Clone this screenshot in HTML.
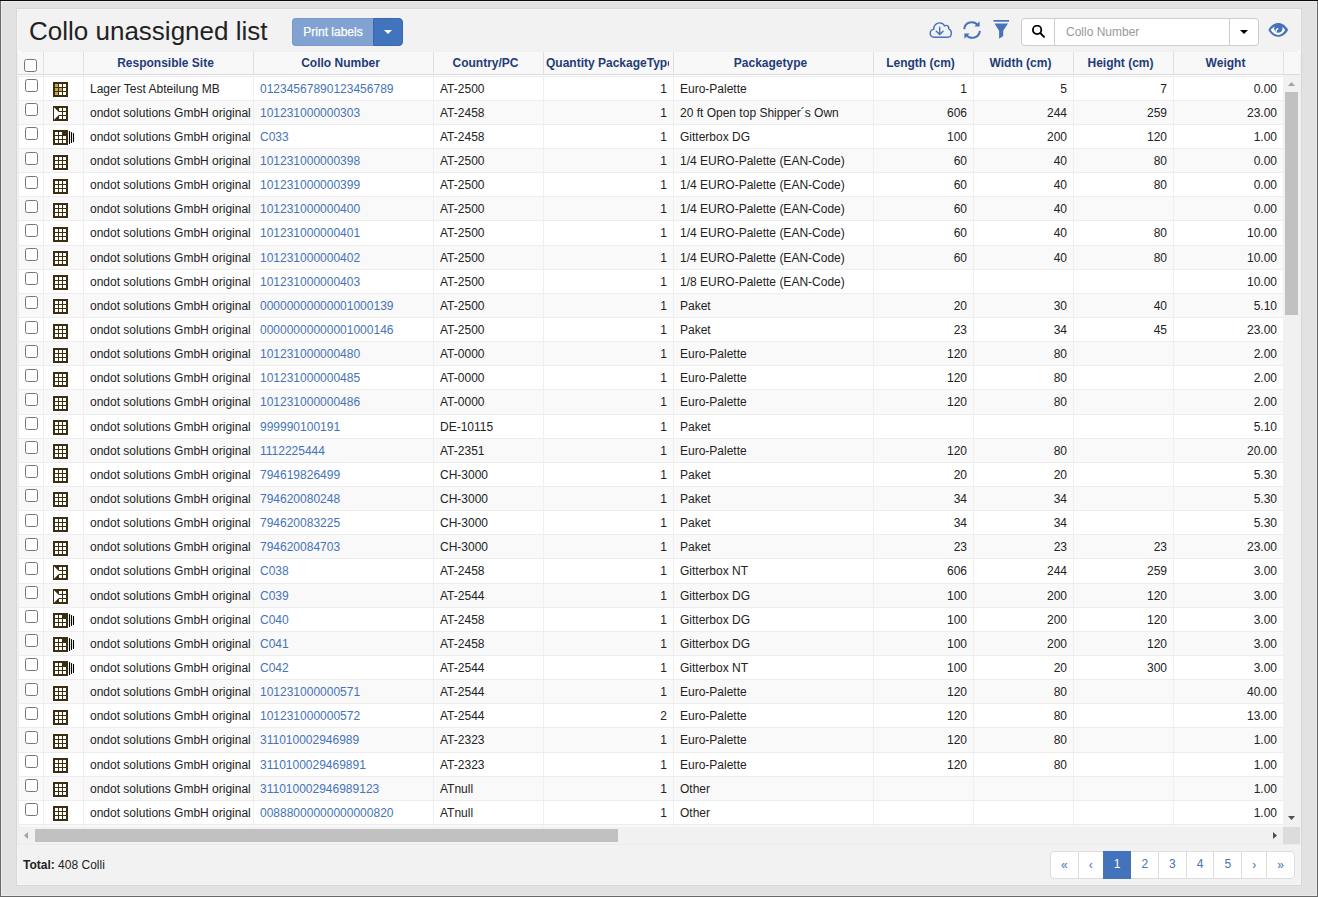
<!DOCTYPE html><html lang="en"><head><meta charset="utf-8"><title>Collo unassigned list</title><style>
*{box-sizing:border-box}
html,body{margin:0;padding:0}
body{width:1318px;height:897px;overflow:hidden;background:#e2e2e2;position:relative;font-family:"Liberation Sans",sans-serif;font-size:12px;color:#222;line-height:17.143px}
.fr{position:absolute;background:#000}
.panel{position:absolute;left:16px;top:8px;width:1286px;height:878px;border:1px solid #d8d8d8;background:#f2f2f2;box-shadow:inset 0 0 0 1px #f5f5f5}
.abs{position:absolute}
h1{position:absolute;margin:0;font-weight:normal;font-size:26px;line-height:30px;color:#222;white-space:nowrap}
.btnl{position:absolute;background:#82a2d1;border:1px solid #7698ca;border-right:0;color:#fff;border-radius:4px 0 0 4px;text-align:center;line-height:26px;font-size:12px;padding:0;-webkit-text-stroke:0.25px #fff}
.btnr{position:absolute;background:#4274bd;border:1px solid #3968af;border-radius:0 4px 4px 0}
.caret{position:absolute;width:0;height:0;border-left:4px solid transparent;border-right:4px solid transparent;border-top:4px solid #fff}
.ig{position:absolute;background:#fff;border:1px solid #ccc;border-radius:4px}
.ig i{position:absolute;top:0;bottom:0;width:1px;background:#ccc}
.ph{position:absolute;color:#999;font-size:12px;line-height:27px;white-space:nowrap}
.grid{position:absolute;background:#fff;overflow:hidden}
.hd{position:absolute;left:0;top:0;right:0;background:#f8f8f8;border-top:1px solid #efefef;border-bottom:1px solid #d7dbe0;border-radius:5px 5px 0 0}
.hc{position:absolute;top:0;bottom:0;border-right:1px solid #dde1e6}
.hi{margin:3px 4px 0 2px;overflow:hidden;font-weight:bold;color:#1f3c78;text-align:center;white-space:nowrap;line-height:17.143px}
.hi u{display:inline-block;width:4px;height:1px}
.vp{position:absolute;left:0;overflow:hidden}
.rw{position:relative;height:24.143px;border-top:1px solid #ededed;background:#fff;white-space:nowrap}
.rw:nth-child(even){background:#f9f9f9}
.rw:before{content:'';position:absolute;left:0;top:0;bottom:0;width:1px;background:#efefef}
.c{position:absolute;top:0;bottom:0;border-right:1px solid #efefef;padding:4px 6px 0 6px;overflow:hidden;white-space:nowrap}
.r{text-align:right;padding-right:6px}
.lk{color:#4573b9}
.ck{position:absolute;left:7px;top:2.5px;width:13px;height:13px;margin:0;padding:0}
.ico{position:absolute;left:8px;top:4.5px}
.sbv{position:absolute;background:#f1f1f1}
.th{position:absolute;background:#c1c1c1}
.ft{position:absolute;white-space:nowrap;color:#222}
.pg{position:absolute;display:flex;height:28px}
.pg span{display:block;height:28px;border:1px solid #ddd;margin-left:-1px;background:#fff;color:#4573b9;text-align:center;line-height:25px;padding:0 10px;font-size:12px}
.pg span:first-child{margin-left:0;border-radius:4px 0 0 4px}
.pg span:last-child{border-radius:0 4px 4px 0}
.pg span b{font-weight:normal;position:relative;top:1px}
.pg span.on{background:#4373bb;border-color:#4373bb;color:#fff;position:relative}
</style></head><body>
<div class="panel">
<h1 style="left:12px;top:7px">Collo unassigned list</h1>
<div class="btnl" style="left:275px;top:9px;width:81px;height:28px">Print labels</div>
<div class="btnr" style="left:356px;top:9px;width:30px;height:28px"><span class="caret" style="left:10px;top:11px"></span></div>
<svg class="abs" style="left:912px;top:12px" width="24" height="18" viewBox="0 0 24 18" fill="none" stroke="#4573b9" stroke-width="1.400" stroke-linecap="round" stroke-linejoin="round"><path d="M4.700 16.200C2.700 16.200 1.200 14.500 1.200 12.300C1.200 10.300 2.600 8.700 4.700 8.400C4.600 4.700 7.200 1.900 10.500 1.900C12.800 1.900 14.700 3.100 15.700 5.000C16.300 4.500 17.000 4.300 17.600 4.400C19.000 4.600 19.900 6.000 19.700 7.900C21.300 8.500 22.300 10.100 22.300 12.000C22.300 14.400 20.800 16.200 18.800 16.200Z"/><path d="M10.700 6.200v7.200M7.300 10.200l3.400 3.400 3.400-3.400"/></svg>
<svg class="abs" style="left:945px;top:10.5px" width="20" height="20" viewBox="0 0 20 20" fill="none" stroke="#4573b9" stroke-width="2" stroke-linecap="butt"><path d="M2.2 9.2a7.6 7.6 0 0 1 13.6-4.0"/><path d="M17.8 10.8a7.6 7.6 0 0 1-13.6 4.0"/><path d="M17.6 1.2v5.2h-5.2z" fill="#4573b9" stroke="none"/><path d="M2.4 18.8v-5.2h5.2z" fill="#4573b9" stroke="none"/></svg>
<svg class="abs" style="left:976px;top:11px" width="17" height="20" viewBox="0 0 17 20" fill="#4573b9"><rect x="0.500" y="0" width="15.500" height="1.700"/><path d="M1.500 3.500h13.500l-4.800 7.200v5.200l-4.100 2.900v-8.100z"/></svg>
<div class="ig" style="left:1004px;top:9px;width:238px;height:28px"><i style="left:32px"></i><i style="left:207px"></i>
<svg class="abs" style="left:10px;top:6px" width="14" height="14" viewBox="0 0 14 14" fill="none" stroke="#000" stroke-width="1.8"><circle cx="5.1" cy="4.9" r="4.2"/><path d="M8.2 8.0l3.9 3.9" stroke-linecap="round"/></svg>
<span class="ph" style="left:44px;top:0">Collo Number</span>
<span class="caret" style="left:218px;top:11px;border-top-color:#000"></span>
</div>
<svg class="abs" style="left:1251px;top:14px" width="21" height="14" viewBox="0 0 21 14"><path d="M0.3 6.900C2.800 2.600 6.200 0 10.200 0s7.400 2.600 9.900 6.900c-2.500 4.300-5.900 6.800-9.900 6.800S2.800 11.200 0.300 6.900z" fill="#4573b9"/><path d="M2.700 7.000C4.600 4.400 7.200 2.900 10.200 2.900s5.300 1.500 6.900 4.100c-1.600 3-4 4.900-6.900 4.900S4.600 10 2.700 7.000z" fill="#fff"/><circle cx="10.350" cy="5.500" r="4.200" fill="#4573b9"/><path d="M9.700 5.800Q8.000 6.300 8.100 8.300" stroke="#fff" stroke-width="1.500" fill="none" stroke-linecap="round"/></svg>
<div class="grid" style="left:0px;top:42px;width:1284px;height:793px;border-left:1px solid #f0f0f0;border-right:1px solid #f0f0f0">
<div class="hd" style="height:24px">
<div class="hc" style="left:0px;width:26px"><input type="checkbox" class="ck" style="left:6px;top:7px"></div>
<div class="hc" style="left:26px;width:40px"></div>
<div class="hc" style="left:66px;width:170px"><div class="hi">Responsible Site<u></u></div></div>
<div class="hc" style="left:236px;width:180px"><div class="hi">Collo Number<u></u></div></div>
<div class="hc" style="left:416px;width:110px"><div class="hi">Country/PC<u></u></div></div>
<div class="hc" style="left:526px;width:130px"><div class="hi">Quantity PackageType<u></u></div></div>
<div class="hc" style="left:656px;width:200px"><div class="hi">Packagetype<u></u></div></div>
<div class="hc" style="left:856px;width:100px"><div class="hi">Length (cm)<u></u></div></div>
<div class="hc" style="left:956px;width:100px"><div class="hi">Width (cm)<u></u></div></div>
<div class="hc" style="left:1056px;width:100px"><div class="hi">Height (cm)<u></u></div></div>
<div class="hc" style="left:1156px;width:110px"><div class="hi">Weight<u></u></div></div>
</div>
<div class="vp" style="top:24px;width:1265px;height:752px;padding-top:0.6px">
<div class="rw">
<div class="c" style="left:0px;width:26px"><input type="checkbox" class="ck"></div>
<div class="c" style="left:26px;width:40px"><svg class="ico" width="17" height="17" viewBox="-1 -1 17 17" shape-rendering="crispEdges"><rect x="-1" y="-1" width="17" height="17" fill="#fff"/><rect x="0" y="0" width="15" height="15" fill="#3a2d10"/><rect x="2" y="2" width="3" height="3" fill="#c9a94d"/><rect x="6" y="2" width="3" height="3" fill="#fff"/><rect x="10" y="2" width="3" height="3" fill="#fff"/><rect x="2" y="6" width="3" height="3" fill="#c9a94d"/><rect x="6" y="6" width="3" height="3" fill="#c9a94d"/><rect x="10" y="6" width="3" height="3" fill="#fff"/><rect x="2" y="10" width="3" height="3" fill="#c9a94d"/><rect x="6" y="10" width="3" height="3" fill="#fff"/><rect x="10" y="10" width="3" height="3" fill="#fff"/></svg></div>
<div class="c" style="left:66px;width:170px">Lager Test Abteilung MB</div>
<div class="c lk" style="left:236px;width:180px">01234567890123456789</div>
<div class="c" style="left:416px;width:110px">AT-2500</div>
<div class="c r" style="left:526px;width:130px">1</div>
<div class="c" style="left:656px;width:200px">Euro-Palette</div>
<div class="c r" style="left:856px;width:100px">1</div>
<div class="c r" style="left:956px;width:100px">5</div>
<div class="c r" style="left:1056px;width:100px">7</div>
<div class="c r" style="left:1156px;width:110px">0.00</div>
</div>
<div class="rw">
<div class="c" style="left:0px;width:26px"><input type="checkbox" class="ck"></div>
<div class="c" style="left:26px;width:40px"><svg class="ico" width="17" height="17" viewBox="-1 -1 17 17" shape-rendering="crispEdges"><rect x="-1" y="-1" width="17" height="17" fill="#fff"/><rect x="0" y="0" width="15" height="15" fill="#3a2d10"/><rect x="6" y="2" width="3" height="3" fill="#fff"/><rect x="10" y="2" width="3" height="3" fill="#fff"/><rect x="6" y="6" width="3" height="3" fill="#fff"/><rect x="10" y="6" width="3" height="3" fill="#fff"/><rect x="6" y="10" width="3" height="3" fill="#fff"/><rect x="10" y="10" width="3" height="3" fill="#fff"/><polygon points="1,1.200 7.300,7.500 1,13.800" fill="#fff" shape-rendering="geometricPrecision"/></svg></div>
<div class="c" style="left:66px;width:170px">ondot solutions GmbH original</div>
<div class="c lk" style="left:236px;width:180px">101231000000303</div>
<div class="c" style="left:416px;width:110px">AT-2458</div>
<div class="c r" style="left:526px;width:130px">1</div>
<div class="c" style="left:656px;width:200px">20 ft Open top Shipper´s Own</div>
<div class="c r" style="left:856px;width:100px">606</div>
<div class="c r" style="left:956px;width:100px">244</div>
<div class="c r" style="left:1056px;width:100px">259</div>
<div class="c r" style="left:1156px;width:110px">23.00</div>
</div>
<div class="rw">
<div class="c" style="left:0px;width:26px"><input type="checkbox" class="ck"></div>
<div class="c" style="left:26px;width:40px"><svg class="ico" width="23" height="17" viewBox="-1 -1 23 17" shape-rendering="crispEdges"><rect x="-1" y="-1" width="17" height="17" fill="#fff"/><path d="M16 -0.500h1.500v1h2v1h2v11h-2v1h-2v1h-1.500z" fill="#fff"/><rect x="0" y="0" width="15" height="15" fill="#3a2d10"/><rect x="2" y="2" width="3" height="3" fill="#fff"/><rect x="6" y="2" width="3" height="3" fill="#fff"/><rect x="2" y="6" width="3" height="3" fill="#fff"/><rect x="6" y="6" width="3" height="3" fill="#fff"/><rect x="10" y="6" width="3" height="3" fill="#fff"/><rect x="2" y="10" width="3" height="3" fill="#fff"/><rect x="6" y="10" width="3" height="3" fill="#fff"/><rect x="10" y="10" width="3" height="3" fill="#fff"/><g shape-rendering="geometricPrecision" stroke="#000" stroke-width="1.100" stroke-linecap="round"><path d="M16.500 1.500v12"/><path d="M18.500 2.500v10"/><path d="M20.500 3.500v8"/></g></svg></div>
<div class="c" style="left:66px;width:170px">ondot solutions GmbH original</div>
<div class="c lk" style="left:236px;width:180px">C033</div>
<div class="c" style="left:416px;width:110px">AT-2458</div>
<div class="c r" style="left:526px;width:130px">1</div>
<div class="c" style="left:656px;width:200px">Gitterbox DG</div>
<div class="c r" style="left:856px;width:100px">100</div>
<div class="c r" style="left:956px;width:100px">200</div>
<div class="c r" style="left:1056px;width:100px">120</div>
<div class="c r" style="left:1156px;width:110px">1.00</div>
</div>
<div class="rw">
<div class="c" style="left:0px;width:26px"><input type="checkbox" class="ck"></div>
<div class="c" style="left:26px;width:40px"><svg class="ico" width="17" height="17" viewBox="-1 -1 17 17" shape-rendering="crispEdges"><rect x="-1" y="-1" width="17" height="17" fill="#fff"/><rect x="0" y="0" width="15" height="15" fill="#3a2d10"/><rect x="2" y="2" width="3" height="3" fill="#fff"/><rect x="6" y="2" width="3" height="3" fill="#fff"/><rect x="10" y="2" width="3" height="3" fill="#fff"/><rect x="2" y="6" width="3" height="3" fill="#fff"/><rect x="6" y="6" width="3" height="3" fill="#fff"/><rect x="10" y="6" width="3" height="3" fill="#fff"/><rect x="2" y="10" width="3" height="3" fill="#fff"/><rect x="6" y="10" width="3" height="3" fill="#fff"/><rect x="10" y="10" width="3" height="3" fill="#fff"/></svg></div>
<div class="c" style="left:66px;width:170px">ondot solutions GmbH original</div>
<div class="c lk" style="left:236px;width:180px">101231000000398</div>
<div class="c" style="left:416px;width:110px">AT-2500</div>
<div class="c r" style="left:526px;width:130px">1</div>
<div class="c" style="left:656px;width:200px">1/4 EURO-Palette (EAN-Code)</div>
<div class="c r" style="left:856px;width:100px">60</div>
<div class="c r" style="left:956px;width:100px">40</div>
<div class="c r" style="left:1056px;width:100px">80</div>
<div class="c r" style="left:1156px;width:110px">0.00</div>
</div>
<div class="rw">
<div class="c" style="left:0px;width:26px"><input type="checkbox" class="ck"></div>
<div class="c" style="left:26px;width:40px"><svg class="ico" width="17" height="17" viewBox="-1 -1 17 17" shape-rendering="crispEdges"><rect x="-1" y="-1" width="17" height="17" fill="#fff"/><rect x="0" y="0" width="15" height="15" fill="#3a2d10"/><rect x="2" y="2" width="3" height="3" fill="#fff"/><rect x="6" y="2" width="3" height="3" fill="#fff"/><rect x="10" y="2" width="3" height="3" fill="#fff"/><rect x="2" y="6" width="3" height="3" fill="#fff"/><rect x="6" y="6" width="3" height="3" fill="#fff"/><rect x="10" y="6" width="3" height="3" fill="#fff"/><rect x="2" y="10" width="3" height="3" fill="#fff"/><rect x="6" y="10" width="3" height="3" fill="#fff"/><rect x="10" y="10" width="3" height="3" fill="#fff"/></svg></div>
<div class="c" style="left:66px;width:170px">ondot solutions GmbH original</div>
<div class="c lk" style="left:236px;width:180px">101231000000399</div>
<div class="c" style="left:416px;width:110px">AT-2500</div>
<div class="c r" style="left:526px;width:130px">1</div>
<div class="c" style="left:656px;width:200px">1/4 EURO-Palette (EAN-Code)</div>
<div class="c r" style="left:856px;width:100px">60</div>
<div class="c r" style="left:956px;width:100px">40</div>
<div class="c r" style="left:1056px;width:100px">80</div>
<div class="c r" style="left:1156px;width:110px">0.00</div>
</div>
<div class="rw">
<div class="c" style="left:0px;width:26px"><input type="checkbox" class="ck"></div>
<div class="c" style="left:26px;width:40px"><svg class="ico" width="17" height="17" viewBox="-1 -1 17 17" shape-rendering="crispEdges"><rect x="-1" y="-1" width="17" height="17" fill="#fff"/><rect x="0" y="0" width="15" height="15" fill="#3a2d10"/><rect x="2" y="2" width="3" height="3" fill="#fff"/><rect x="6" y="2" width="3" height="3" fill="#fff"/><rect x="10" y="2" width="3" height="3" fill="#fff"/><rect x="2" y="6" width="3" height="3" fill="#fff"/><rect x="6" y="6" width="3" height="3" fill="#fff"/><rect x="10" y="6" width="3" height="3" fill="#fff"/><rect x="2" y="10" width="3" height="3" fill="#fff"/><rect x="6" y="10" width="3" height="3" fill="#fff"/><rect x="10" y="10" width="3" height="3" fill="#fff"/></svg></div>
<div class="c" style="left:66px;width:170px">ondot solutions GmbH original</div>
<div class="c lk" style="left:236px;width:180px">101231000000400</div>
<div class="c" style="left:416px;width:110px">AT-2500</div>
<div class="c r" style="left:526px;width:130px">1</div>
<div class="c" style="left:656px;width:200px">1/4 EURO-Palette (EAN-Code)</div>
<div class="c r" style="left:856px;width:100px">60</div>
<div class="c r" style="left:956px;width:100px">40</div>
<div class="c r" style="left:1056px;width:100px"></div>
<div class="c r" style="left:1156px;width:110px">0.00</div>
</div>
<div class="rw">
<div class="c" style="left:0px;width:26px"><input type="checkbox" class="ck"></div>
<div class="c" style="left:26px;width:40px"><svg class="ico" width="17" height="17" viewBox="-1 -1 17 17" shape-rendering="crispEdges"><rect x="-1" y="-1" width="17" height="17" fill="#fff"/><rect x="0" y="0" width="15" height="15" fill="#3a2d10"/><rect x="2" y="2" width="3" height="3" fill="#fff"/><rect x="6" y="2" width="3" height="3" fill="#fff"/><rect x="10" y="2" width="3" height="3" fill="#fff"/><rect x="2" y="6" width="3" height="3" fill="#fff"/><rect x="6" y="6" width="3" height="3" fill="#fff"/><rect x="10" y="6" width="3" height="3" fill="#fff"/><rect x="2" y="10" width="3" height="3" fill="#fff"/><rect x="6" y="10" width="3" height="3" fill="#fff"/><rect x="10" y="10" width="3" height="3" fill="#fff"/></svg></div>
<div class="c" style="left:66px;width:170px">ondot solutions GmbH original</div>
<div class="c lk" style="left:236px;width:180px">101231000000401</div>
<div class="c" style="left:416px;width:110px">AT-2500</div>
<div class="c r" style="left:526px;width:130px">1</div>
<div class="c" style="left:656px;width:200px">1/4 EURO-Palette (EAN-Code)</div>
<div class="c r" style="left:856px;width:100px">60</div>
<div class="c r" style="left:956px;width:100px">40</div>
<div class="c r" style="left:1056px;width:100px">80</div>
<div class="c r" style="left:1156px;width:110px">10.00</div>
</div>
<div class="rw">
<div class="c" style="left:0px;width:26px"><input type="checkbox" class="ck"></div>
<div class="c" style="left:26px;width:40px"><svg class="ico" width="17" height="17" viewBox="-1 -1 17 17" shape-rendering="crispEdges"><rect x="-1" y="-1" width="17" height="17" fill="#fff"/><rect x="0" y="0" width="15" height="15" fill="#3a2d10"/><rect x="2" y="2" width="3" height="3" fill="#fff"/><rect x="6" y="2" width="3" height="3" fill="#fff"/><rect x="10" y="2" width="3" height="3" fill="#fff"/><rect x="2" y="6" width="3" height="3" fill="#fff"/><rect x="6" y="6" width="3" height="3" fill="#fff"/><rect x="10" y="6" width="3" height="3" fill="#fff"/><rect x="2" y="10" width="3" height="3" fill="#fff"/><rect x="6" y="10" width="3" height="3" fill="#fff"/><rect x="10" y="10" width="3" height="3" fill="#fff"/></svg></div>
<div class="c" style="left:66px;width:170px">ondot solutions GmbH original</div>
<div class="c lk" style="left:236px;width:180px">101231000000402</div>
<div class="c" style="left:416px;width:110px">AT-2500</div>
<div class="c r" style="left:526px;width:130px">1</div>
<div class="c" style="left:656px;width:200px">1/4 EURO-Palette (EAN-Code)</div>
<div class="c r" style="left:856px;width:100px">60</div>
<div class="c r" style="left:956px;width:100px">40</div>
<div class="c r" style="left:1056px;width:100px">80</div>
<div class="c r" style="left:1156px;width:110px">10.00</div>
</div>
<div class="rw">
<div class="c" style="left:0px;width:26px"><input type="checkbox" class="ck"></div>
<div class="c" style="left:26px;width:40px"><svg class="ico" width="17" height="17" viewBox="-1 -1 17 17" shape-rendering="crispEdges"><rect x="-1" y="-1" width="17" height="17" fill="#fff"/><rect x="0" y="0" width="15" height="15" fill="#3a2d10"/><rect x="2" y="2" width="3" height="3" fill="#fff"/><rect x="6" y="2" width="3" height="3" fill="#fff"/><rect x="10" y="2" width="3" height="3" fill="#fff"/><rect x="2" y="6" width="3" height="3" fill="#fff"/><rect x="6" y="6" width="3" height="3" fill="#fff"/><rect x="10" y="6" width="3" height="3" fill="#fff"/><rect x="2" y="10" width="3" height="3" fill="#fff"/><rect x="6" y="10" width="3" height="3" fill="#fff"/><rect x="10" y="10" width="3" height="3" fill="#fff"/></svg></div>
<div class="c" style="left:66px;width:170px">ondot solutions GmbH original</div>
<div class="c lk" style="left:236px;width:180px">101231000000403</div>
<div class="c" style="left:416px;width:110px">AT-2500</div>
<div class="c r" style="left:526px;width:130px">1</div>
<div class="c" style="left:656px;width:200px">1/8 EURO-Palette (EAN-Code)</div>
<div class="c r" style="left:856px;width:100px"></div>
<div class="c r" style="left:956px;width:100px"></div>
<div class="c r" style="left:1056px;width:100px"></div>
<div class="c r" style="left:1156px;width:110px">10.00</div>
</div>
<div class="rw">
<div class="c" style="left:0px;width:26px"><input type="checkbox" class="ck"></div>
<div class="c" style="left:26px;width:40px"><svg class="ico" width="17" height="17" viewBox="-1 -1 17 17" shape-rendering="crispEdges"><rect x="-1" y="-1" width="17" height="17" fill="#fff"/><rect x="0" y="0" width="15" height="15" fill="#3a2d10"/><rect x="2" y="2" width="3" height="3" fill="#fff"/><rect x="6" y="2" width="3" height="3" fill="#fff"/><rect x="10" y="2" width="3" height="3" fill="#fff"/><rect x="2" y="6" width="3" height="3" fill="#fff"/><rect x="6" y="6" width="3" height="3" fill="#fff"/><rect x="10" y="6" width="3" height="3" fill="#fff"/><rect x="2" y="10" width="3" height="3" fill="#fff"/><rect x="6" y="10" width="3" height="3" fill="#fff"/><rect x="10" y="10" width="3" height="3" fill="#fff"/></svg></div>
<div class="c" style="left:66px;width:170px">ondot solutions GmbH original</div>
<div class="c lk" style="left:236px;width:180px">00000000000001000139</div>
<div class="c" style="left:416px;width:110px">AT-2500</div>
<div class="c r" style="left:526px;width:130px">1</div>
<div class="c" style="left:656px;width:200px">Paket</div>
<div class="c r" style="left:856px;width:100px">20</div>
<div class="c r" style="left:956px;width:100px">30</div>
<div class="c r" style="left:1056px;width:100px">40</div>
<div class="c r" style="left:1156px;width:110px">5.10</div>
</div>
<div class="rw">
<div class="c" style="left:0px;width:26px"><input type="checkbox" class="ck"></div>
<div class="c" style="left:26px;width:40px"><svg class="ico" width="17" height="17" viewBox="-1 -1 17 17" shape-rendering="crispEdges"><rect x="-1" y="-1" width="17" height="17" fill="#fff"/><rect x="0" y="0" width="15" height="15" fill="#3a2d10"/><rect x="2" y="2" width="3" height="3" fill="#fff"/><rect x="6" y="2" width="3" height="3" fill="#fff"/><rect x="10" y="2" width="3" height="3" fill="#fff"/><rect x="2" y="6" width="3" height="3" fill="#fff"/><rect x="6" y="6" width="3" height="3" fill="#fff"/><rect x="10" y="6" width="3" height="3" fill="#fff"/><rect x="2" y="10" width="3" height="3" fill="#fff"/><rect x="6" y="10" width="3" height="3" fill="#fff"/><rect x="10" y="10" width="3" height="3" fill="#fff"/></svg></div>
<div class="c" style="left:66px;width:170px">ondot solutions GmbH original</div>
<div class="c lk" style="left:236px;width:180px">00000000000001000146</div>
<div class="c" style="left:416px;width:110px">AT-2500</div>
<div class="c r" style="left:526px;width:130px">1</div>
<div class="c" style="left:656px;width:200px">Paket</div>
<div class="c r" style="left:856px;width:100px">23</div>
<div class="c r" style="left:956px;width:100px">34</div>
<div class="c r" style="left:1056px;width:100px">45</div>
<div class="c r" style="left:1156px;width:110px">23.00</div>
</div>
<div class="rw">
<div class="c" style="left:0px;width:26px"><input type="checkbox" class="ck"></div>
<div class="c" style="left:26px;width:40px"><svg class="ico" width="17" height="17" viewBox="-1 -1 17 17" shape-rendering="crispEdges"><rect x="-1" y="-1" width="17" height="17" fill="#fff"/><rect x="0" y="0" width="15" height="15" fill="#3a2d10"/><rect x="2" y="2" width="3" height="3" fill="#fff"/><rect x="6" y="2" width="3" height="3" fill="#fff"/><rect x="10" y="2" width="3" height="3" fill="#fff"/><rect x="2" y="6" width="3" height="3" fill="#fff"/><rect x="6" y="6" width="3" height="3" fill="#fff"/><rect x="10" y="6" width="3" height="3" fill="#fff"/><rect x="2" y="10" width="3" height="3" fill="#fff"/><rect x="6" y="10" width="3" height="3" fill="#fff"/><rect x="10" y="10" width="3" height="3" fill="#fff"/></svg></div>
<div class="c" style="left:66px;width:170px">ondot solutions GmbH original</div>
<div class="c lk" style="left:236px;width:180px">101231000000480</div>
<div class="c" style="left:416px;width:110px">AT-0000</div>
<div class="c r" style="left:526px;width:130px">1</div>
<div class="c" style="left:656px;width:200px">Euro-Palette</div>
<div class="c r" style="left:856px;width:100px">120</div>
<div class="c r" style="left:956px;width:100px">80</div>
<div class="c r" style="left:1056px;width:100px"></div>
<div class="c r" style="left:1156px;width:110px">2.00</div>
</div>
<div class="rw">
<div class="c" style="left:0px;width:26px"><input type="checkbox" class="ck"></div>
<div class="c" style="left:26px;width:40px"><svg class="ico" width="17" height="17" viewBox="-1 -1 17 17" shape-rendering="crispEdges"><rect x="-1" y="-1" width="17" height="17" fill="#fff"/><rect x="0" y="0" width="15" height="15" fill="#3a2d10"/><rect x="2" y="2" width="3" height="3" fill="#fff"/><rect x="6" y="2" width="3" height="3" fill="#fff"/><rect x="10" y="2" width="3" height="3" fill="#fff"/><rect x="2" y="6" width="3" height="3" fill="#fff"/><rect x="6" y="6" width="3" height="3" fill="#fff"/><rect x="10" y="6" width="3" height="3" fill="#fff"/><rect x="2" y="10" width="3" height="3" fill="#fff"/><rect x="6" y="10" width="3" height="3" fill="#fff"/><rect x="10" y="10" width="3" height="3" fill="#fff"/></svg></div>
<div class="c" style="left:66px;width:170px">ondot solutions GmbH original</div>
<div class="c lk" style="left:236px;width:180px">101231000000485</div>
<div class="c" style="left:416px;width:110px">AT-0000</div>
<div class="c r" style="left:526px;width:130px">1</div>
<div class="c" style="left:656px;width:200px">Euro-Palette</div>
<div class="c r" style="left:856px;width:100px">120</div>
<div class="c r" style="left:956px;width:100px">80</div>
<div class="c r" style="left:1056px;width:100px"></div>
<div class="c r" style="left:1156px;width:110px">2.00</div>
</div>
<div class="rw">
<div class="c" style="left:0px;width:26px"><input type="checkbox" class="ck"></div>
<div class="c" style="left:26px;width:40px"><svg class="ico" width="17" height="17" viewBox="-1 -1 17 17" shape-rendering="crispEdges"><rect x="-1" y="-1" width="17" height="17" fill="#fff"/><rect x="0" y="0" width="15" height="15" fill="#3a2d10"/><rect x="2" y="2" width="3" height="3" fill="#fff"/><rect x="6" y="2" width="3" height="3" fill="#fff"/><rect x="10" y="2" width="3" height="3" fill="#fff"/><rect x="2" y="6" width="3" height="3" fill="#fff"/><rect x="6" y="6" width="3" height="3" fill="#fff"/><rect x="10" y="6" width="3" height="3" fill="#fff"/><rect x="2" y="10" width="3" height="3" fill="#fff"/><rect x="6" y="10" width="3" height="3" fill="#fff"/><rect x="10" y="10" width="3" height="3" fill="#fff"/></svg></div>
<div class="c" style="left:66px;width:170px">ondot solutions GmbH original</div>
<div class="c lk" style="left:236px;width:180px">101231000000486</div>
<div class="c" style="left:416px;width:110px">AT-0000</div>
<div class="c r" style="left:526px;width:130px">1</div>
<div class="c" style="left:656px;width:200px">Euro-Palette</div>
<div class="c r" style="left:856px;width:100px">120</div>
<div class="c r" style="left:956px;width:100px">80</div>
<div class="c r" style="left:1056px;width:100px"></div>
<div class="c r" style="left:1156px;width:110px">2.00</div>
</div>
<div class="rw">
<div class="c" style="left:0px;width:26px"><input type="checkbox" class="ck"></div>
<div class="c" style="left:26px;width:40px"><svg class="ico" width="17" height="17" viewBox="-1 -1 17 17" shape-rendering="crispEdges"><rect x="-1" y="-1" width="17" height="17" fill="#fff"/><rect x="0" y="0" width="15" height="15" fill="#3a2d10"/><rect x="2" y="2" width="3" height="3" fill="#fff"/><rect x="6" y="2" width="3" height="3" fill="#fff"/><rect x="10" y="2" width="3" height="3" fill="#fff"/><rect x="2" y="6" width="3" height="3" fill="#fff"/><rect x="6" y="6" width="3" height="3" fill="#fff"/><rect x="10" y="6" width="3" height="3" fill="#fff"/><rect x="2" y="10" width="3" height="3" fill="#fff"/><rect x="6" y="10" width="3" height="3" fill="#fff"/><rect x="10" y="10" width="3" height="3" fill="#fff"/></svg></div>
<div class="c" style="left:66px;width:170px">ondot solutions GmbH original</div>
<div class="c lk" style="left:236px;width:180px">999990100191</div>
<div class="c" style="left:416px;width:110px">DE-10115</div>
<div class="c r" style="left:526px;width:130px">1</div>
<div class="c" style="left:656px;width:200px">Paket</div>
<div class="c r" style="left:856px;width:100px"></div>
<div class="c r" style="left:956px;width:100px"></div>
<div class="c r" style="left:1056px;width:100px"></div>
<div class="c r" style="left:1156px;width:110px">5.10</div>
</div>
<div class="rw">
<div class="c" style="left:0px;width:26px"><input type="checkbox" class="ck"></div>
<div class="c" style="left:26px;width:40px"><svg class="ico" width="17" height="17" viewBox="-1 -1 17 17" shape-rendering="crispEdges"><rect x="-1" y="-1" width="17" height="17" fill="#fff"/><rect x="0" y="0" width="15" height="15" fill="#3a2d10"/><rect x="2" y="2" width="3" height="3" fill="#fff"/><rect x="6" y="2" width="3" height="3" fill="#fff"/><rect x="10" y="2" width="3" height="3" fill="#fff"/><rect x="2" y="6" width="3" height="3" fill="#fff"/><rect x="6" y="6" width="3" height="3" fill="#fff"/><rect x="10" y="6" width="3" height="3" fill="#fff"/><rect x="2" y="10" width="3" height="3" fill="#fff"/><rect x="6" y="10" width="3" height="3" fill="#fff"/><rect x="10" y="10" width="3" height="3" fill="#fff"/></svg></div>
<div class="c" style="left:66px;width:170px">ondot solutions GmbH original</div>
<div class="c lk" style="left:236px;width:180px">1112225444</div>
<div class="c" style="left:416px;width:110px">AT-2351</div>
<div class="c r" style="left:526px;width:130px">1</div>
<div class="c" style="left:656px;width:200px">Euro-Palette</div>
<div class="c r" style="left:856px;width:100px">120</div>
<div class="c r" style="left:956px;width:100px">80</div>
<div class="c r" style="left:1056px;width:100px"></div>
<div class="c r" style="left:1156px;width:110px">20.00</div>
</div>
<div class="rw">
<div class="c" style="left:0px;width:26px"><input type="checkbox" class="ck"></div>
<div class="c" style="left:26px;width:40px"><svg class="ico" width="17" height="17" viewBox="-1 -1 17 17" shape-rendering="crispEdges"><rect x="-1" y="-1" width="17" height="17" fill="#fff"/><rect x="0" y="0" width="15" height="15" fill="#3a2d10"/><rect x="2" y="2" width="3" height="3" fill="#fff"/><rect x="6" y="2" width="3" height="3" fill="#fff"/><rect x="10" y="2" width="3" height="3" fill="#fff"/><rect x="2" y="6" width="3" height="3" fill="#fff"/><rect x="6" y="6" width="3" height="3" fill="#fff"/><rect x="10" y="6" width="3" height="3" fill="#fff"/><rect x="2" y="10" width="3" height="3" fill="#fff"/><rect x="6" y="10" width="3" height="3" fill="#fff"/><rect x="10" y="10" width="3" height="3" fill="#fff"/></svg></div>
<div class="c" style="left:66px;width:170px">ondot solutions GmbH original</div>
<div class="c lk" style="left:236px;width:180px">794619826499</div>
<div class="c" style="left:416px;width:110px">CH-3000</div>
<div class="c r" style="left:526px;width:130px">1</div>
<div class="c" style="left:656px;width:200px">Paket</div>
<div class="c r" style="left:856px;width:100px">20</div>
<div class="c r" style="left:956px;width:100px">20</div>
<div class="c r" style="left:1056px;width:100px"></div>
<div class="c r" style="left:1156px;width:110px">5.30</div>
</div>
<div class="rw">
<div class="c" style="left:0px;width:26px"><input type="checkbox" class="ck"></div>
<div class="c" style="left:26px;width:40px"><svg class="ico" width="17" height="17" viewBox="-1 -1 17 17" shape-rendering="crispEdges"><rect x="-1" y="-1" width="17" height="17" fill="#fff"/><rect x="0" y="0" width="15" height="15" fill="#3a2d10"/><rect x="2" y="2" width="3" height="3" fill="#fff"/><rect x="6" y="2" width="3" height="3" fill="#fff"/><rect x="10" y="2" width="3" height="3" fill="#fff"/><rect x="2" y="6" width="3" height="3" fill="#fff"/><rect x="6" y="6" width="3" height="3" fill="#fff"/><rect x="10" y="6" width="3" height="3" fill="#fff"/><rect x="2" y="10" width="3" height="3" fill="#fff"/><rect x="6" y="10" width="3" height="3" fill="#fff"/><rect x="10" y="10" width="3" height="3" fill="#fff"/></svg></div>
<div class="c" style="left:66px;width:170px">ondot solutions GmbH original</div>
<div class="c lk" style="left:236px;width:180px">794620080248</div>
<div class="c" style="left:416px;width:110px">CH-3000</div>
<div class="c r" style="left:526px;width:130px">1</div>
<div class="c" style="left:656px;width:200px">Paket</div>
<div class="c r" style="left:856px;width:100px">34</div>
<div class="c r" style="left:956px;width:100px">34</div>
<div class="c r" style="left:1056px;width:100px"></div>
<div class="c r" style="left:1156px;width:110px">5.30</div>
</div>
<div class="rw">
<div class="c" style="left:0px;width:26px"><input type="checkbox" class="ck"></div>
<div class="c" style="left:26px;width:40px"><svg class="ico" width="17" height="17" viewBox="-1 -1 17 17" shape-rendering="crispEdges"><rect x="-1" y="-1" width="17" height="17" fill="#fff"/><rect x="0" y="0" width="15" height="15" fill="#3a2d10"/><rect x="2" y="2" width="3" height="3" fill="#fff"/><rect x="6" y="2" width="3" height="3" fill="#fff"/><rect x="10" y="2" width="3" height="3" fill="#fff"/><rect x="2" y="6" width="3" height="3" fill="#fff"/><rect x="6" y="6" width="3" height="3" fill="#fff"/><rect x="10" y="6" width="3" height="3" fill="#fff"/><rect x="2" y="10" width="3" height="3" fill="#fff"/><rect x="6" y="10" width="3" height="3" fill="#fff"/><rect x="10" y="10" width="3" height="3" fill="#fff"/></svg></div>
<div class="c" style="left:66px;width:170px">ondot solutions GmbH original</div>
<div class="c lk" style="left:236px;width:180px">794620083225</div>
<div class="c" style="left:416px;width:110px">CH-3000</div>
<div class="c r" style="left:526px;width:130px">1</div>
<div class="c" style="left:656px;width:200px">Paket</div>
<div class="c r" style="left:856px;width:100px">34</div>
<div class="c r" style="left:956px;width:100px">34</div>
<div class="c r" style="left:1056px;width:100px"></div>
<div class="c r" style="left:1156px;width:110px">5.30</div>
</div>
<div class="rw">
<div class="c" style="left:0px;width:26px"><input type="checkbox" class="ck"></div>
<div class="c" style="left:26px;width:40px"><svg class="ico" width="17" height="17" viewBox="-1 -1 17 17" shape-rendering="crispEdges"><rect x="-1" y="-1" width="17" height="17" fill="#fff"/><rect x="0" y="0" width="15" height="15" fill="#3a2d10"/><rect x="2" y="2" width="3" height="3" fill="#fff"/><rect x="6" y="2" width="3" height="3" fill="#fff"/><rect x="10" y="2" width="3" height="3" fill="#fff"/><rect x="2" y="6" width="3" height="3" fill="#fff"/><rect x="6" y="6" width="3" height="3" fill="#fff"/><rect x="10" y="6" width="3" height="3" fill="#fff"/><rect x="2" y="10" width="3" height="3" fill="#fff"/><rect x="6" y="10" width="3" height="3" fill="#fff"/><rect x="10" y="10" width="3" height="3" fill="#fff"/></svg></div>
<div class="c" style="left:66px;width:170px">ondot solutions GmbH original</div>
<div class="c lk" style="left:236px;width:180px">794620084703</div>
<div class="c" style="left:416px;width:110px">CH-3000</div>
<div class="c r" style="left:526px;width:130px">1</div>
<div class="c" style="left:656px;width:200px">Paket</div>
<div class="c r" style="left:856px;width:100px">23</div>
<div class="c r" style="left:956px;width:100px">23</div>
<div class="c r" style="left:1056px;width:100px">23</div>
<div class="c r" style="left:1156px;width:110px">23.00</div>
</div>
<div class="rw">
<div class="c" style="left:0px;width:26px"><input type="checkbox" class="ck"></div>
<div class="c" style="left:26px;width:40px"><svg class="ico" width="17" height="17" viewBox="-1 -1 17 17" shape-rendering="crispEdges"><rect x="-1" y="-1" width="17" height="17" fill="#fff"/><rect x="0" y="0" width="15" height="15" fill="#3a2d10"/><rect x="6" y="2" width="3" height="3" fill="#fff"/><rect x="10" y="2" width="3" height="3" fill="#fff"/><rect x="6" y="6" width="3" height="3" fill="#fff"/><rect x="10" y="6" width="3" height="3" fill="#fff"/><rect x="6" y="10" width="3" height="3" fill="#fff"/><rect x="10" y="10" width="3" height="3" fill="#fff"/><polygon points="1,1.200 7.300,7.500 1,13.800" fill="#fff" shape-rendering="geometricPrecision"/></svg></div>
<div class="c" style="left:66px;width:170px">ondot solutions GmbH original</div>
<div class="c lk" style="left:236px;width:180px">C038</div>
<div class="c" style="left:416px;width:110px">AT-2458</div>
<div class="c r" style="left:526px;width:130px">1</div>
<div class="c" style="left:656px;width:200px">Gitterbox NT</div>
<div class="c r" style="left:856px;width:100px">606</div>
<div class="c r" style="left:956px;width:100px">244</div>
<div class="c r" style="left:1056px;width:100px">259</div>
<div class="c r" style="left:1156px;width:110px">3.00</div>
</div>
<div class="rw">
<div class="c" style="left:0px;width:26px"><input type="checkbox" class="ck"></div>
<div class="c" style="left:26px;width:40px"><svg class="ico" width="17" height="17" viewBox="-1 -1 17 17" shape-rendering="crispEdges"><rect x="-1" y="-1" width="17" height="17" fill="#fff"/><rect x="0" y="0" width="15" height="15" fill="#3a2d10"/><rect x="6" y="2" width="3" height="3" fill="#fff"/><rect x="10" y="2" width="3" height="3" fill="#fff"/><rect x="6" y="6" width="3" height="3" fill="#fff"/><rect x="10" y="6" width="3" height="3" fill="#fff"/><rect x="6" y="10" width="3" height="3" fill="#fff"/><rect x="10" y="10" width="3" height="3" fill="#fff"/><polygon points="1,1.200 7.300,7.500 1,13.800" fill="#fff" shape-rendering="geometricPrecision"/></svg></div>
<div class="c" style="left:66px;width:170px">ondot solutions GmbH original</div>
<div class="c lk" style="left:236px;width:180px">C039</div>
<div class="c" style="left:416px;width:110px">AT-2544</div>
<div class="c r" style="left:526px;width:130px">1</div>
<div class="c" style="left:656px;width:200px">Gitterbox DG</div>
<div class="c r" style="left:856px;width:100px">100</div>
<div class="c r" style="left:956px;width:100px">200</div>
<div class="c r" style="left:1056px;width:100px">120</div>
<div class="c r" style="left:1156px;width:110px">3.00</div>
</div>
<div class="rw">
<div class="c" style="left:0px;width:26px"><input type="checkbox" class="ck"></div>
<div class="c" style="left:26px;width:40px"><svg class="ico" width="23" height="17" viewBox="-1 -1 23 17" shape-rendering="crispEdges"><rect x="-1" y="-1" width="17" height="17" fill="#fff"/><path d="M16 -0.500h1.500v1h2v1h2v11h-2v1h-2v1h-1.500z" fill="#fff"/><rect x="0" y="0" width="15" height="15" fill="#3a2d10"/><rect x="2" y="2" width="3" height="3" fill="#fff"/><rect x="6" y="2" width="3" height="3" fill="#fff"/><rect x="2" y="6" width="3" height="3" fill="#fff"/><rect x="6" y="6" width="3" height="3" fill="#fff"/><rect x="10" y="6" width="3" height="3" fill="#fff"/><rect x="2" y="10" width="3" height="3" fill="#fff"/><rect x="6" y="10" width="3" height="3" fill="#fff"/><rect x="10" y="10" width="3" height="3" fill="#fff"/><g shape-rendering="geometricPrecision" stroke="#000" stroke-width="1.100" stroke-linecap="round"><path d="M16.500 1.500v12"/><path d="M18.500 2.500v10"/><path d="M20.500 3.500v8"/></g></svg></div>
<div class="c" style="left:66px;width:170px">ondot solutions GmbH original</div>
<div class="c lk" style="left:236px;width:180px">C040</div>
<div class="c" style="left:416px;width:110px">AT-2458</div>
<div class="c r" style="left:526px;width:130px">1</div>
<div class="c" style="left:656px;width:200px">Gitterbox DG</div>
<div class="c r" style="left:856px;width:100px">100</div>
<div class="c r" style="left:956px;width:100px">200</div>
<div class="c r" style="left:1056px;width:100px">120</div>
<div class="c r" style="left:1156px;width:110px">3.00</div>
</div>
<div class="rw">
<div class="c" style="left:0px;width:26px"><input type="checkbox" class="ck"></div>
<div class="c" style="left:26px;width:40px"><svg class="ico" width="23" height="17" viewBox="-1 -1 23 17" shape-rendering="crispEdges"><rect x="-1" y="-1" width="17" height="17" fill="#fff"/><path d="M16 -0.500h1.500v1h2v1h2v11h-2v1h-2v1h-1.500z" fill="#fff"/><rect x="0" y="0" width="15" height="15" fill="#3a2d10"/><rect x="2" y="2" width="3" height="3" fill="#fff"/><rect x="6" y="2" width="3" height="3" fill="#fff"/><rect x="2" y="6" width="3" height="3" fill="#fff"/><rect x="6" y="6" width="3" height="3" fill="#fff"/><rect x="10" y="6" width="3" height="3" fill="#fff"/><rect x="2" y="10" width="3" height="3" fill="#fff"/><rect x="6" y="10" width="3" height="3" fill="#fff"/><rect x="10" y="10" width="3" height="3" fill="#fff"/><g shape-rendering="geometricPrecision" stroke="#000" stroke-width="1.100" stroke-linecap="round"><path d="M16.500 1.500v12"/><path d="M18.500 2.500v10"/><path d="M20.500 3.500v8"/></g></svg></div>
<div class="c" style="left:66px;width:170px">ondot solutions GmbH original</div>
<div class="c lk" style="left:236px;width:180px">C041</div>
<div class="c" style="left:416px;width:110px">AT-2458</div>
<div class="c r" style="left:526px;width:130px">1</div>
<div class="c" style="left:656px;width:200px">Gitterbox DG</div>
<div class="c r" style="left:856px;width:100px">100</div>
<div class="c r" style="left:956px;width:100px">200</div>
<div class="c r" style="left:1056px;width:100px">120</div>
<div class="c r" style="left:1156px;width:110px">3.00</div>
</div>
<div class="rw">
<div class="c" style="left:0px;width:26px"><input type="checkbox" class="ck"></div>
<div class="c" style="left:26px;width:40px"><svg class="ico" width="23" height="17" viewBox="-1 -1 23 17" shape-rendering="crispEdges"><rect x="-1" y="-1" width="17" height="17" fill="#fff"/><path d="M16 -0.500h1.500v1h2v1h2v11h-2v1h-2v1h-1.500z" fill="#fff"/><rect x="0" y="0" width="15" height="15" fill="#3a2d10"/><rect x="2" y="2" width="3" height="3" fill="#fff"/><rect x="6" y="2" width="3" height="3" fill="#fff"/><rect x="2" y="6" width="3" height="3" fill="#fff"/><rect x="6" y="6" width="3" height="3" fill="#fff"/><rect x="10" y="6" width="3" height="3" fill="#fff"/><rect x="2" y="10" width="3" height="3" fill="#fff"/><rect x="6" y="10" width="3" height="3" fill="#fff"/><rect x="10" y="10" width="3" height="3" fill="#fff"/><g shape-rendering="geometricPrecision" stroke="#000" stroke-width="1.100" stroke-linecap="round"><path d="M16.500 1.500v12"/><path d="M18.500 2.500v10"/><path d="M20.500 3.500v8"/></g></svg></div>
<div class="c" style="left:66px;width:170px">ondot solutions GmbH original</div>
<div class="c lk" style="left:236px;width:180px">C042</div>
<div class="c" style="left:416px;width:110px">AT-2544</div>
<div class="c r" style="left:526px;width:130px">1</div>
<div class="c" style="left:656px;width:200px">Gitterbox NT</div>
<div class="c r" style="left:856px;width:100px">100</div>
<div class="c r" style="left:956px;width:100px">20</div>
<div class="c r" style="left:1056px;width:100px">300</div>
<div class="c r" style="left:1156px;width:110px">3.00</div>
</div>
<div class="rw">
<div class="c" style="left:0px;width:26px"><input type="checkbox" class="ck"></div>
<div class="c" style="left:26px;width:40px"><svg class="ico" width="17" height="17" viewBox="-1 -1 17 17" shape-rendering="crispEdges"><rect x="-1" y="-1" width="17" height="17" fill="#fff"/><rect x="0" y="0" width="15" height="15" fill="#3a2d10"/><rect x="2" y="2" width="3" height="3" fill="#fff"/><rect x="6" y="2" width="3" height="3" fill="#fff"/><rect x="10" y="2" width="3" height="3" fill="#fff"/><rect x="2" y="6" width="3" height="3" fill="#fff"/><rect x="6" y="6" width="3" height="3" fill="#fff"/><rect x="10" y="6" width="3" height="3" fill="#fff"/><rect x="2" y="10" width="3" height="3" fill="#fff"/><rect x="6" y="10" width="3" height="3" fill="#fff"/><rect x="10" y="10" width="3" height="3" fill="#fff"/></svg></div>
<div class="c" style="left:66px;width:170px">ondot solutions GmbH original</div>
<div class="c lk" style="left:236px;width:180px">101231000000571</div>
<div class="c" style="left:416px;width:110px">AT-2544</div>
<div class="c r" style="left:526px;width:130px">1</div>
<div class="c" style="left:656px;width:200px">Euro-Palette</div>
<div class="c r" style="left:856px;width:100px">120</div>
<div class="c r" style="left:956px;width:100px">80</div>
<div class="c r" style="left:1056px;width:100px"></div>
<div class="c r" style="left:1156px;width:110px">40.00</div>
</div>
<div class="rw">
<div class="c" style="left:0px;width:26px"><input type="checkbox" class="ck"></div>
<div class="c" style="left:26px;width:40px"><svg class="ico" width="17" height="17" viewBox="-1 -1 17 17" shape-rendering="crispEdges"><rect x="-1" y="-1" width="17" height="17" fill="#fff"/><rect x="0" y="0" width="15" height="15" fill="#3a2d10"/><rect x="2" y="2" width="3" height="3" fill="#fff"/><rect x="6" y="2" width="3" height="3" fill="#fff"/><rect x="10" y="2" width="3" height="3" fill="#fff"/><rect x="2" y="6" width="3" height="3" fill="#fff"/><rect x="6" y="6" width="3" height="3" fill="#fff"/><rect x="10" y="6" width="3" height="3" fill="#fff"/><rect x="2" y="10" width="3" height="3" fill="#fff"/><rect x="6" y="10" width="3" height="3" fill="#fff"/><rect x="10" y="10" width="3" height="3" fill="#fff"/></svg></div>
<div class="c" style="left:66px;width:170px">ondot solutions GmbH original</div>
<div class="c lk" style="left:236px;width:180px">101231000000572</div>
<div class="c" style="left:416px;width:110px">AT-2544</div>
<div class="c r" style="left:526px;width:130px">2</div>
<div class="c" style="left:656px;width:200px">Euro-Palette</div>
<div class="c r" style="left:856px;width:100px">120</div>
<div class="c r" style="left:956px;width:100px">80</div>
<div class="c r" style="left:1056px;width:100px"></div>
<div class="c r" style="left:1156px;width:110px">13.00</div>
</div>
<div class="rw">
<div class="c" style="left:0px;width:26px"><input type="checkbox" class="ck"></div>
<div class="c" style="left:26px;width:40px"><svg class="ico" width="17" height="17" viewBox="-1 -1 17 17" shape-rendering="crispEdges"><rect x="-1" y="-1" width="17" height="17" fill="#fff"/><rect x="0" y="0" width="15" height="15" fill="#3a2d10"/><rect x="2" y="2" width="3" height="3" fill="#fff"/><rect x="6" y="2" width="3" height="3" fill="#fff"/><rect x="10" y="2" width="3" height="3" fill="#fff"/><rect x="2" y="6" width="3" height="3" fill="#fff"/><rect x="6" y="6" width="3" height="3" fill="#fff"/><rect x="10" y="6" width="3" height="3" fill="#fff"/><rect x="2" y="10" width="3" height="3" fill="#fff"/><rect x="6" y="10" width="3" height="3" fill="#fff"/><rect x="10" y="10" width="3" height="3" fill="#fff"/></svg></div>
<div class="c" style="left:66px;width:170px">ondot solutions GmbH original</div>
<div class="c lk" style="left:236px;width:180px">311010002946989</div>
<div class="c" style="left:416px;width:110px">AT-2323</div>
<div class="c r" style="left:526px;width:130px">1</div>
<div class="c" style="left:656px;width:200px">Euro-Palette</div>
<div class="c r" style="left:856px;width:100px">120</div>
<div class="c r" style="left:956px;width:100px">80</div>
<div class="c r" style="left:1056px;width:100px"></div>
<div class="c r" style="left:1156px;width:110px">1.00</div>
</div>
<div class="rw">
<div class="c" style="left:0px;width:26px"><input type="checkbox" class="ck"></div>
<div class="c" style="left:26px;width:40px"><svg class="ico" width="17" height="17" viewBox="-1 -1 17 17" shape-rendering="crispEdges"><rect x="-1" y="-1" width="17" height="17" fill="#fff"/><rect x="0" y="0" width="15" height="15" fill="#3a2d10"/><rect x="2" y="2" width="3" height="3" fill="#fff"/><rect x="6" y="2" width="3" height="3" fill="#fff"/><rect x="10" y="2" width="3" height="3" fill="#fff"/><rect x="2" y="6" width="3" height="3" fill="#fff"/><rect x="6" y="6" width="3" height="3" fill="#fff"/><rect x="10" y="6" width="3" height="3" fill="#fff"/><rect x="2" y="10" width="3" height="3" fill="#fff"/><rect x="6" y="10" width="3" height="3" fill="#fff"/><rect x="10" y="10" width="3" height="3" fill="#fff"/></svg></div>
<div class="c" style="left:66px;width:170px">ondot solutions GmbH original</div>
<div class="c lk" style="left:236px;width:180px">3110100029469891</div>
<div class="c" style="left:416px;width:110px">AT-2323</div>
<div class="c r" style="left:526px;width:130px">1</div>
<div class="c" style="left:656px;width:200px">Euro-Palette</div>
<div class="c r" style="left:856px;width:100px">120</div>
<div class="c r" style="left:956px;width:100px">80</div>
<div class="c r" style="left:1056px;width:100px"></div>
<div class="c r" style="left:1156px;width:110px">1.00</div>
</div>
<div class="rw">
<div class="c" style="left:0px;width:26px"><input type="checkbox" class="ck"></div>
<div class="c" style="left:26px;width:40px"><svg class="ico" width="17" height="17" viewBox="-1 -1 17 17" shape-rendering="crispEdges"><rect x="-1" y="-1" width="17" height="17" fill="#fff"/><rect x="0" y="0" width="15" height="15" fill="#3a2d10"/><rect x="2" y="2" width="3" height="3" fill="#fff"/><rect x="6" y="2" width="3" height="3" fill="#fff"/><rect x="10" y="2" width="3" height="3" fill="#fff"/><rect x="2" y="6" width="3" height="3" fill="#fff"/><rect x="6" y="6" width="3" height="3" fill="#fff"/><rect x="10" y="6" width="3" height="3" fill="#fff"/><rect x="2" y="10" width="3" height="3" fill="#fff"/><rect x="6" y="10" width="3" height="3" fill="#fff"/><rect x="10" y="10" width="3" height="3" fill="#fff"/></svg></div>
<div class="c" style="left:66px;width:170px">ondot solutions GmbH original</div>
<div class="c lk" style="left:236px;width:180px">311010002946989123</div>
<div class="c" style="left:416px;width:110px">ATnull</div>
<div class="c r" style="left:526px;width:130px">1</div>
<div class="c" style="left:656px;width:200px">Other</div>
<div class="c r" style="left:856px;width:100px"></div>
<div class="c r" style="left:956px;width:100px"></div>
<div class="c r" style="left:1056px;width:100px"></div>
<div class="c r" style="left:1156px;width:110px">1.00</div>
</div>
<div class="rw">
<div class="c" style="left:0px;width:26px"><input type="checkbox" class="ck"></div>
<div class="c" style="left:26px;width:40px"><svg class="ico" width="17" height="17" viewBox="-1 -1 17 17" shape-rendering="crispEdges"><rect x="-1" y="-1" width="17" height="17" fill="#fff"/><rect x="0" y="0" width="15" height="15" fill="#3a2d10"/><rect x="2" y="2" width="3" height="3" fill="#fff"/><rect x="6" y="2" width="3" height="3" fill="#fff"/><rect x="10" y="2" width="3" height="3" fill="#fff"/><rect x="2" y="6" width="3" height="3" fill="#fff"/><rect x="6" y="6" width="3" height="3" fill="#fff"/><rect x="10" y="6" width="3" height="3" fill="#fff"/><rect x="2" y="10" width="3" height="3" fill="#fff"/><rect x="6" y="10" width="3" height="3" fill="#fff"/><rect x="10" y="10" width="3" height="3" fill="#fff"/></svg></div>
<div class="c" style="left:66px;width:170px">ondot solutions GmbH original</div>
<div class="c lk" style="left:236px;width:180px">00888000000000000820</div>
<div class="c" style="left:416px;width:110px">ATnull</div>
<div class="c r" style="left:526px;width:130px">1</div>
<div class="c" style="left:656px;width:200px">Other</div>
<div class="c r" style="left:856px;width:100px"></div>
<div class="c r" style="left:956px;width:100px"></div>
<div class="c r" style="left:1056px;width:100px"></div>
<div class="c r" style="left:1156px;width:110px">1.00</div>
</div>
<div class="rw">
<div class="c" style="left:0px;width:26px"></div>
<div class="c" style="left:26px;width:40px"></div>
<div class="c" style="left:66px;width:170px"></div>
<div class="c" style="left:236px;width:180px"></div>
<div class="c" style="left:416px;width:110px"></div>
<div class="c" style="left:526px;width:130px"></div>
<div class="c" style="left:656px;width:200px"></div>
<div class="c" style="left:856px;width:100px"></div>
<div class="c" style="left:956px;width:100px"></div>
<div class="c" style="left:1056px;width:100px"></div>
<div class="c" style="left:1156px;width:110px"></div>
</div>
</div>
<div class="sbv" style="left:1265px;top:24px;width:17px;height:752px">
<div class="th" style="left:2px;top:17px;width:13px;height:223px"></div>
<svg class="abs" style="left:5px;top:7px" width="7" height="4" viewBox="0 0 7 4"><path d="M0 4L3.5 0 7 4z" fill="#a3a3a3"/></svg>
<svg class="abs" style="left:5px;top:741px" width="7" height="4" viewBox="0 0 7 4"><path d="M0 0L3.5 4 7 0z" fill="#505050"/></svg>
</div>
<div class="sbv" style="left:0;top:776px;width:1265px;height:17px">
<div class="th" style="left:17px;top:2px;width:583px;height:13px"></div>
<svg class="abs" style="left:6px;top:5px" width="4" height="7" viewBox="0 0 4 7"><path d="M4 0L0 3.5 4 7z" fill="#a3a3a3"/></svg>
<svg class="abs" style="left:1255px;top:5px" width="4" height="7" viewBox="0 0 4 7"><path d="M0 0L4 3.5 0 7z" fill="#505050"/></svg>
</div>
<div class="abs" style="left:1265px;top:776px;width:17px;height:17px;background:#dcdcdc"></div>
</div>
<div class="abs" style="left:0px;top:835px;width:1284px;height:1px;background:#ececec"></div>
<div class="ft" style="left:6px;top:848px"><b>Total:</b> 408 Colli</div>
<div class="pg" style="left:1033px;top:842px">
<span><b>«</b></span>
<span><b>‹</b></span>
<span class="on">1</span>
<span>2</span>
<span>3</span>
<span>4</span>
<span>5</span>
<span><b>›</b></span>
<span><b>»</b></span>
</div>
</div>
<div class="fr" style="left:1px;top:1px;width:1316px;height:895px;background:none;border:1px solid #ebebeb"></div>
<div class="fr" style="left:0;top:0;width:1318px;height:1px;background:#0a0a0a"></div>
<div class="fr" style="left:0;top:1px;width:1px;height:896px;background:#6a6a6a"></div>
<div class="fr" style="left:1317px;top:1px;width:1px;height:896px;background:#686868"></div>
<div class="fr" style="left:0;top:896px;width:1318px;height:1px;background:#686868"></div>
</body></html>
